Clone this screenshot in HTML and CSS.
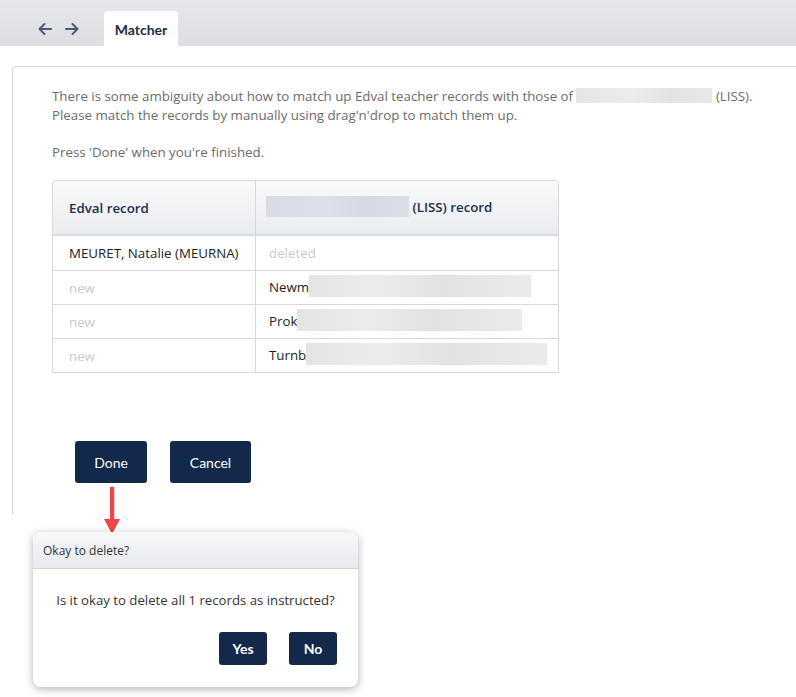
FILE: index.html
```html
<!DOCTYPE html>
<html lang="en">
<head>
    <meta charset="UTF-8">
    <title>Matcher</title>
    <link rel="stylesheet" href="styles.css">
</head>
<body>
    <div class="topbar">
        <div class="nav-arrows">
            <svg width="16" height="16" viewBox="0 0 16 16"><path d="M14 8H2.5M7.5 3 2.5 8l5 5" fill="none" stroke="#4b5b78" stroke-width="2" stroke-linecap="round" stroke-linejoin="round"/></svg>
            <svg width="16" height="16" viewBox="0 0 16 16"><path d="M2 8h11.5M8.5 3l5 5-5 5" fill="none" stroke="#4b5b78" stroke-width="2" stroke-linecap="round" stroke-linejoin="round"/></svg>
        </div>
        <div class="tab">Matcher</div>
    </div>

    <div class="panel">
        <p class="intro">There is some ambiguity about how to match up Edval teacher records with those of <span class="blur blur-inline"></span> (LISS).<br>Please match the records by manually using drag'n'drop to match them up.</p>
        <p class="intro">Press 'Done' when you're finished.</p>

        <table class="match-table">
            <thead>
                <tr>
                    <th class="col-edval">Edval record</th>
                    <th><span class="blur blur-head"></span> (LISS) record</th>
                </tr>
            </thead>
            <tbody>
                <tr>
                    <td>MEURET, Natalie (MEURNA)</td>
                    <td class="muted">deleted</td>
                </tr>
                <tr>
                    <td class="muted">new</td>
                    <td>Newm<span class="blur blur-cell" style="width: 222px"></span></td>
                </tr>
                <tr>
                    <td class="muted">new</td>
                    <td>Prok<span class="blur blur-cell" style="width: 225px"></span></td>
                </tr>
                <tr>
                    <td class="muted">new</td>
                    <td>Turnb<span class="blur blur-cell" style="width: 241px"></span></td>
                </tr>
            </tbody>
        </table>

        <div class="actions">
            <button class="btn btn-done">Done</button>
            <button class="btn btn-cancel">Cancel</button>
        </div>
    </div>

    <div class="red-arrow"></div>

    <div class="dialog">
        <div class="dialog-header">Okay to delete?</div>
        <div class="dialog-body">
            <p>Is it okay to delete all 1 records as instructed?</p>
            <div class="dialog-actions">
                <button class="btn btn-small">Yes</button>
                <button class="btn btn-small">No</button>
            </div>
        </div>
    </div>
</body>
</html>
```

FILE: styles.css
```css
* {
    margin: 0;
    padding: 0;
    box-sizing: border-box;
}

body {
    background-color: #fff;
    font-family: 'Open Sans', 'Noto Sans', sans-serif;
    font-size: 13.3px;
    color: #222;
    overflow: hidden;
    position: relative;
    height: 697px;
}

.topbar {
    height: 46px;
    background: linear-gradient(#e6e7eb, #dcdee3);
    display: flex;
    align-items: flex-end;
    padding-left: 37px;
}

.nav-arrows {
    display: flex;
    gap: 11px;
    align-self: center;
    margin-top: 12px;
}

.tab {
    margin-left: 24px;
    width: 74px;
    height: 35px;
    background-color: #fff;
    border-radius: 4px 4px 0 0;
    font-family: 'Lato', sans-serif;
    font-weight: bold;
    font-size: 14px;
    color: #1c2c4c;
    display: flex;
    align-items: center;
    justify-content: center;
    padding-top: 2px;
}

.panel {
    margin: 20px 0 0 12px;
    width: 800px;
    height: 448px;
    border-left: 1px solid #d3d6dc;
    border-top: 1px solid #d3d6dc;
    border-top-left-radius: 4px;
    padding: 20px 0 0 39px;
}

.intro {
    color: #6b6b6b;
    line-height: 19px;
    margin-bottom: 18px;
}

.blur {
    display: inline-block;
    vertical-align: middle;
    background: linear-gradient(90deg, #e6e6e6, #ececec 40%, #e3e3e3 70%, #e9e9e9);
    filter: blur(0.6px);
}

.blur-inline {
    width: 136px;
    height: 15px;
    margin-top: -3px;
}

.blur-head {
    width: 143px;
    height: 21px;
    background: linear-gradient(90deg, #d8dbe2, #dde0e6 40%, #d6d9e0 70%, #dcdfe5);
    margin-top: -3px;
    margin-left: -3px;
}

.blur-cell {
    height: 22px;
    background: linear-gradient(90deg, #e4e4e4, #ececec 30%, #e2e2e2 60%, #ebebeb);
    margin-top: -3px;
}

.match-table {
    width: 507px;
    table-layout: fixed;
    border-collapse: separate;
    border-spacing: 0;
    border: 1px solid #d5d8dd;
    border-radius: 4px 4px 0 0;
    margin-top: 10px;
}

.match-table th {
    height: 55px;
    text-align: left;
    font-weight: 600;
    color: #1e2d4b;
    background: linear-gradient(#fafafb, #e9ebef);
    padding: 0 13px;
    border-bottom: 2px solid #d9dce1;
    white-space: nowrap;
}

.match-table th:first-child {
    width: 203px;
    padding-left: 16px;
    border-radius: 4px 0 0 0;
    border-right: 1px solid #d5d8dd;
}

.match-table th:last-child {
    border-radius: 0 4px 0 0;
}

.match-table td {
    height: 34px;
    padding: 0 13px;
    border-top: 1px solid #d5d8dd;
    white-space: nowrap;
    overflow: hidden;
}

.match-table tbody tr:first-child td {
    border-top: none;
}

.match-table td:first-child {
    padding-left: 16px;
    border-right: 1px solid #d5d8dd;
}

.muted {
    color: #c9c9c9;
}

.actions {
    display: flex;
    gap: 23px;
    margin: 68px 0 0 23px;
}

.btn {
    background-color: #13294b;
    color: #fff;
    border: none;
    border-radius: 3px;
    font-family: 'Lato', sans-serif;
    font-size: 14px;
    height: 42px;
}

.btn-done {
    width: 72px;
}

.btn-cancel {
    width: 81px;
}

.red-arrow {
    position: absolute;
    left: 110px;
    top: 487px;
    width: 4px;
    height: 34px;
    background-color: #f24545;
    box-shadow: 1px 1px 2px rgba(0, 0, 0, 0.2);
}

.red-arrow::after {
    content: '';
    position: absolute;
    left: -6px;
    top: 32px;
    border-left: 8px solid transparent;
    border-right: 8px solid transparent;
    border-top: 15px solid #f24545;
}

.dialog {
    position: absolute;
    left: 33px;
    top: 532px;
    width: 325px;
    height: 155px;
    background-color: #fff;
    border-radius: 8px;
    box-shadow: 0 2px 8px rgba(0, 0, 0, 0.3);
    overflow: hidden;
}

.dialog-header {
    height: 37px;
    background: linear-gradient(#f8f8fa, #e8e9ed);
    border-bottom: 1px solid #cfd2d8;
    font-size: 12px;
    color: #333;
    padding: 10px 10px 0;
}

.dialog-body p {
    text-align: center;
    margin-top: 22px;
    color: #333;
    font-size: 13.2px;
}

.dialog-actions {
    display: flex;
    justify-content: flex-end;
    gap: 22px;
    padding-right: 21px;
    margin-top: 23px;
}

.btn-small {
    height: 33px;
    width: 48px;
    font-weight: bold;
}
```
